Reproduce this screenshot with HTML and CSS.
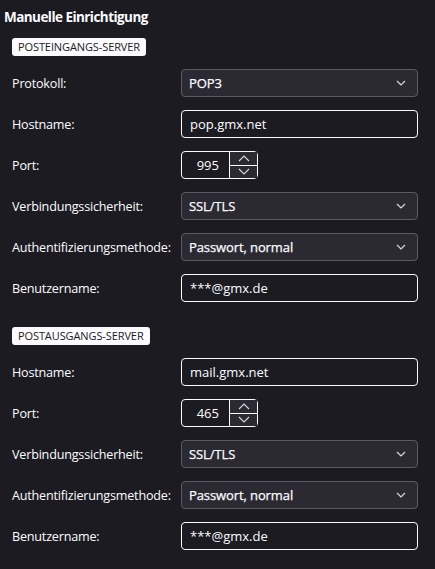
FILE: index.html
```html
<!DOCTYPE html>
<html lang="de">
<head>
<meta charset="utf-8">
<link rel="stylesheet" href="styles.css">
</head>
<body>
<div class="page">
  <h1 class="title">Manuelle Einrichtigung</h1>

  <section class="group">
    <div class="badge">POSTEINGANGS-SERVER</div>
    <div class="form">
      <label class="lbl">Protokoll:</label>
      <div class="select"><span>POP3</span><svg class="chev" width="10" height="6" viewBox="0 0 10 6"><path d="M1 1 L5 5 L9 1" fill="none" stroke="#d8d8dc" stroke-width="1.2"/></svg></div>

      <label class="lbl">Hostname:</label>
      <div class="input">pop.gmx.net</div>

      <label class="lbl">Port:</label>
      <div class="port"><span class="pval">995</span><div class="spin"><div class="sbtn"><svg width="12" height="7" viewBox="0 0 12 7"><path d="M1 6 L6 1 L11 6" fill="none" stroke="#d8d8dc" stroke-width="1.1"/></svg></div><div class="sbtn"><svg width="12" height="7" viewBox="0 0 12 7"><path d="M1 1 L6 6 L11 1" fill="none" stroke="#d8d8dc" stroke-width="1.1"/></svg></div></div></div>

      <label class="lbl">Verbindungssicherheit:</label>
      <div class="select"><span>SSL/TLS</span><svg class="chev" width="10" height="6" viewBox="0 0 10 6"><path d="M1 1 L5 5 L9 1" fill="none" stroke="#d8d8dc" stroke-width="1.2"/></svg></div>

      <label class="lbl">Authentifizierungsmethode:</label>
      <div class="select"><span>Passwort, normal</span><svg class="chev" width="10" height="6" viewBox="0 0 10 6"><path d="M1 1 L5 5 L9 1" fill="none" stroke="#d8d8dc" stroke-width="1.2"/></svg></div>

      <label class="lbl">Benutzername:</label>
      <div class="input">***@gmx.de</div>
    </div>
  </section>

  <section class="group">
    <div class="badge">POSTAUSGANGS-SERVER</div>
    <div class="form">
      <label class="lbl">Hostname:</label>
      <div class="input">mail.gmx.net</div>

      <label class="lbl">Port:</label>
      <div class="port"><span class="pval">465</span><div class="spin"><div class="sbtn"><svg width="12" height="7" viewBox="0 0 12 7"><path d="M1 6 L6 1 L11 6" fill="none" stroke="#d8d8dc" stroke-width="1.1"/></svg></div><div class="sbtn"><svg width="12" height="7" viewBox="0 0 12 7"><path d="M1 1 L6 6 L11 1" fill="none" stroke="#d8d8dc" stroke-width="1.1"/></svg></div></div></div>

      <label class="lbl">Verbindungssicherheit:</label>
      <div class="select"><span>SSL/TLS</span><svg class="chev" width="10" height="6" viewBox="0 0 10 6"><path d="M1 1 L5 5 L9 1" fill="none" stroke="#d8d8dc" stroke-width="1.2"/></svg></div>

      <label class="lbl">Authentifizierungsmethode:</label>
      <div class="select"><span>Passwort, normal</span><svg class="chev" width="10" height="6" viewBox="0 0 10 6"><path d="M1 1 L5 5 L9 1" fill="none" stroke="#d8d8dc" stroke-width="1.2"/></svg></div>

      <label class="lbl">Benutzername:</label>
      <div class="input">***@gmx.de</div>
    </div>
  </section>
</div>
</body>
</html>
```

FILE: styles.css
```css
html, body {
  margin: 0;
  padding: 0;
  background: #1c1b22;
  color: #fbfbfe;
  font-family: "Open Sans", "Noto Sans", sans-serif;
  font-size: 13px;
}
.page {
  padding: 7px 17px 0 4px;
  width: 414px;
  box-sizing: border-box;
}
.title {
  margin: 0;
  font-size: 13.5px;
  font-weight: 700;
  line-height: 20px;
  letter-spacing: -0.55px;
}
.group {
  padding-left: 8px;
}
.group:first-of-type {
  margin-top: 10px;
}
.group + .group {
  margin-top: 24px;
}
.badge {
  display: inline-block;
  background: #fbfbfe;
  color: #1c1b22;
  font-size: 11px;
  line-height: 18px;
  height: 18px;
  padding: 0 6px;
  border-radius: 3px;
  letter-spacing: -0.1px;
}
.form {
  display: grid;
  grid-template-columns: 169px 237px;
  row-gap: 13px;
  align-items: center;
  margin-top: 13px;
}
.lbl {
  font-size: 12.6px;
  letter-spacing: -0.2px;
}
.select {
  height: 28px;
  box-sizing: border-box;
  background: #2b2a33;
  border: 1px solid #5b5a62;
  border-radius: 4px;
  display: flex;
  align-items: center;
  justify-content: space-between;
  padding: 0 11px 0 7px;
  letter-spacing: -0.1px;
  -webkit-text-stroke: 0.25px #fbfbfe;
}
.input {
  height: 28px;
  box-sizing: border-box;
  background: #1c1b22;
  border: 1px solid #fbfbfe;
  border-radius: 4px;
  display: flex;
  align-items: center;
  padding: 0 8px;
}
.port {
  width: 77px;
  height: 28px;
  box-sizing: border-box;
  border: 1px solid #fbfbfe;
  border-radius: 4px;
  display: flex;
}
.pval {
  flex: 1;
  display: flex;
  align-items: center;
  justify-content: flex-end;
  padding-right: 10px;
}
.spin {
  width: 27px;
  display: flex;
  flex-direction: column;
  border-left: 1px solid #fbfbfe;
}
.sbtn {
  flex: 1;
  display: flex;
  align-items: center;
  justify-content: center;
  background: #2b2a33;
}
.sbtn + .sbtn {
  border-top: 1px solid #fbfbfe;
}
```
